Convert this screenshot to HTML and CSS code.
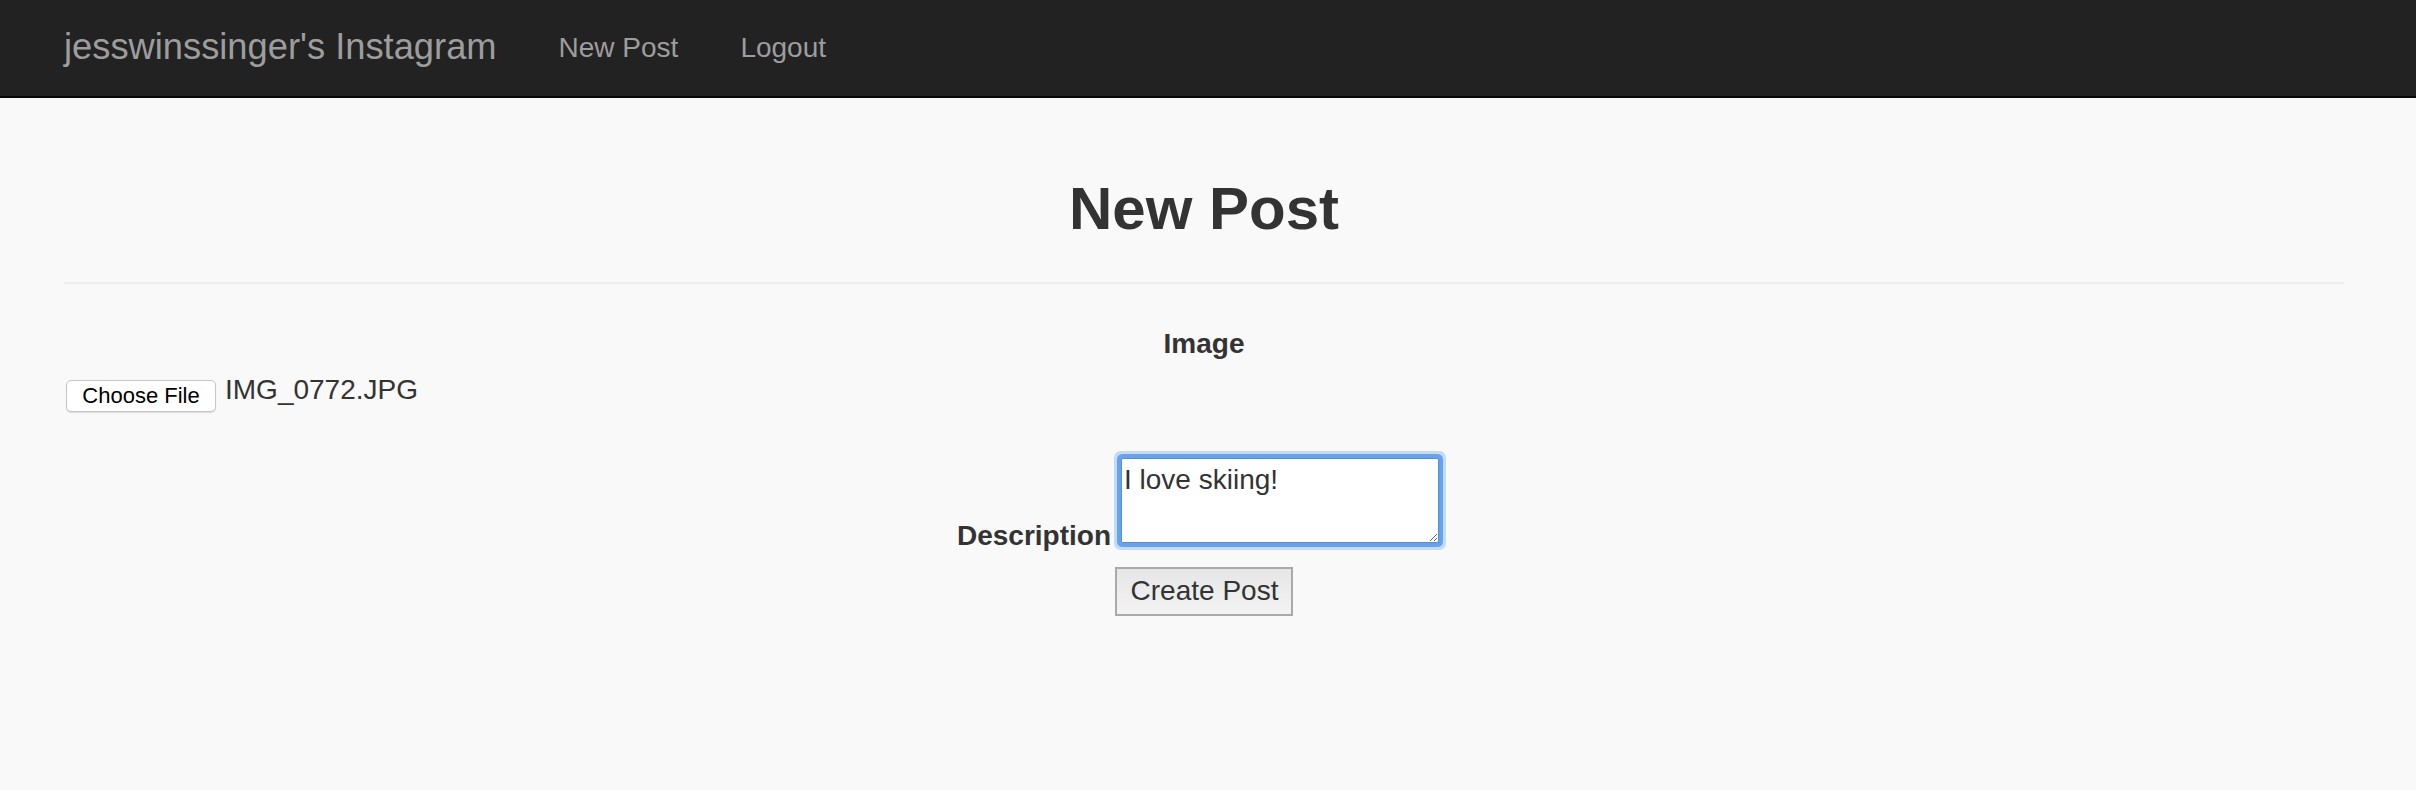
FILE: index.html
```html
<!DOCTYPE html>
<html lang="en">
<head>
<meta charset="utf-8">
<title>New Post</title>
<link rel="stylesheet" href="styles.css">
</head>
<body>
<nav class="navbar">
  <div class="navbar-inner">
    <a class="brand" href="#">jesswinssinger's Instagram</a>
    <a class="nav-link" href="#">New Post</a>
    <a class="nav-link nav-link-2" href="#">Logout</a>
  </div>
</nav>
<main class="container">
  <div class="page-header">
    <h1 class="title">New Post</h1>
  </div>
  <form class="post-form">
    <div class="image-label">Image</div>
    <div class="file-row">
      <span class="file-btn">Choose File</span>
      <span class="file-name">IMG_0772.JPG</span>
    </div>
    <div class="desc-row">
      <label class="desc-label" for="desc">Description</label>
      <textarea id="desc" class="desc-input">I love skiing!</textarea>
    </div>
    <div class="submit-row">
      <button type="button" class="submit-btn">Create Post</button>
    </div>
  </form>
</main>
</body>
</html>
```

FILE: styles.css
```css
html, body {
  margin: 0;
  padding: 0;
}
body {
  background: #f9f9f9;
  color: #333333;
  font-family: "Liberation Sans", Arial, Helvetica, sans-serif;
  width: 2416px;
  height: 790px;
  overflow: hidden;
}
.navbar {
  height: 96px;
  background: #222222;
  border-bottom: 2px solid #080808;
}
.navbar-inner {
  display: flex;
  align-items: flex-start;
  padding: 0 72px 0 64px;
  height: 96px;
}
.brand {
  font-size: 36.3px;
  line-height: 94px;
  color: #9d9d9d;
  text-decoration: none;
}
.nav-link {
  font-size: 28px;
  line-height: 95px;
  color: #9d9d9d;
  text-decoration: none;
  margin-left: 62px;
}
.nav-link-2 {
  margin-left: 62px;
}
.container {
  padding: 0 72px 0 64px;
}
.page-header {
  margin-top: 78px;
  padding-bottom: 40px;
  border-bottom: 2px solid #eeeeee;
  margin-bottom: 40px;
}
.title {
  margin: 0;
  font-size: 60px;
  line-height: 66px;
  font-weight: bold;
  text-align: center;
  color: #333333;
}
.post-form {
  display: flex;
  flex-direction: column;
}
.image-label {
  font-size: 28px;
  line-height: 40px;
  font-weight: bold;
  text-align: center;
  margin-bottom: 10px;
}
.file-row {
  display: flex;
  align-items: flex-start;
  height: 37px;
}
.file-btn {
  margin-top: 6px;
  margin-left: 2px;
  box-sizing: border-box;
  width: 150px;
  height: 32px;
  line-height: 30px;
  font-size: 22px;
  text-align: center;
  color: #000000;
  background: #ffffff;
  border: 1px solid #c6c6c6;
  border-radius: 5px;
  box-shadow: 0 1px 1px rgba(0, 0, 0, 0.12);
}
.file-name {
  margin-left: 9px;
  font-size: 28px;
  line-height: 32px;
  color: #333333;
}
.desc-row {
  display: flex;
  justify-content: center;
  align-items: flex-start;
  margin-top: 47px;
}
.desc-label {
  font-size: 28px;
  line-height: 40px;
  font-weight: bold;
  margin-top: 58px;
}
.desc-input {
  box-sizing: border-box;
  width: 318px;
  height: 85px;
  margin: 0 12px 0 10px;
  padding: 5px 2px;
  font-family: "Liberation Sans", Arial, Helvetica, sans-serif;
  font-size: 28px;
  line-height: 32px;
  color: #333333;
  background: #ffffff;
  border: 1px solid #4f8fdc;
  border-radius: 2px;
  outline: none;
  box-shadow: 0 0 0 4px #6aa2e8, 0 0 0 7px #c2dbf7;
  resize: both;
}
.submit-row {
  display: flex;
  justify-content: center;
  margin-top: 11px;
}
.submit-btn {
  box-sizing: border-box;
  height: 49px;
  padding: 6px 13px 7px 14px;
  font-family: "Liberation Sans", Arial, Helvetica, sans-serif;
  font-size: 28px;
  line-height: 32px;
  color: #333333;
  background: linear-gradient(to bottom, #e6e6e6, #f3f3f3);
  border: 2px solid #aaaaaa;
  border-radius: 0;
}
```
